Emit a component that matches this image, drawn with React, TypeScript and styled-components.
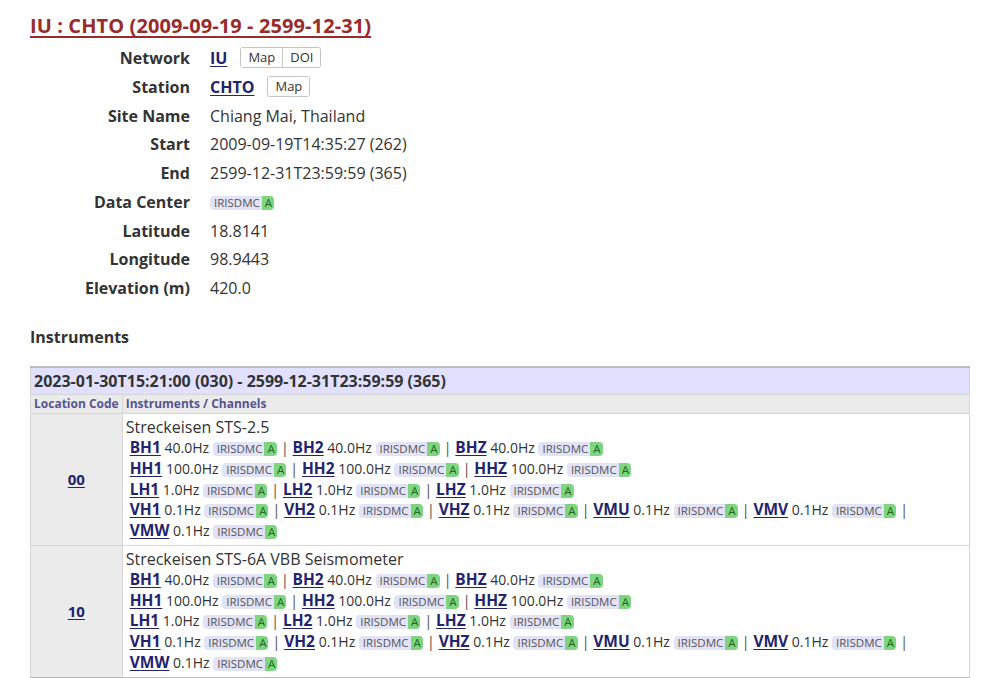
import React from "react";
import styled, { createGlobalStyle } from "styled-components";

const Global = createGlobalStyle`
  html, body { margin: 0; padding: 0; background: #fff; }
  body { font-family: "Open Sans", "Noto Sans", sans-serif; color: #333; }
`;

const Page = styled.div`
  padding: 12px 24px 0 30px;
`;

const Title = styled.h1`
  margin: 0;
  font-size: 20px;
  line-height: 28px;
  font-weight: 700;
  letter-spacing: 0.1px;
  a { color: #982c2c; text-decoration: underline; text-underline-offset: 3px; }
`;

const Details = styled.dl`
  display: grid;
  grid-template-columns: 160px 1fr;
  column-gap: 20px;
  row-gap: 4.75px;
  margin: 6px 0 0 0;
`;

const Label = styled.dt`
  text-align: right;
  font-weight: 700;
  font-size: 16px;
  line-height: 24px;
  color: #333;
`;

const Value = styled.dd`
  margin: 0;
  font-size: 16px;
  line-height: 24px;
  color: #333;
  display: flex;
  align-items: center;
  gap: 13px;
`;

const StrongLink = styled.a`
  color: #23236e;
  font-weight: 700;
  text-decoration: underline;
  text-underline-offset: 2px;
`;

const ButtonGroup = styled.span`
  display: inline-flex;
  border: 1px solid #c4c4c4;
  border-radius: 3px;
  height: 19px;
  align-items: stretch;
  overflow: hidden;
  margin-top: -1px;
`;

const SmallButton = styled.span`
  font-size: 13px;
  line-height: 19px;
  padding: 0 7px;
  color: #333;
  background: #fff;
  & + & { border-left: 1px solid #c4c4c4; }
`;

const Badge = styled.span`
  display: inline-flex;
  align-items: stretch;
  vertical-align: 0px;
  font-size: 11.5px;
  line-height: 14px;
  height: 14px;
`;

const BadgeName = styled.span`
  background: #e3e3f7;
  color: #555;
  padding: 0 2px 0 4px;
  border-radius: 4px 0 0 4px;
`;

const BadgeStatus = styled.span`
  background: #7fd47f;
  color: #236623;
  padding: 0 2px 0 3px;
  border-radius: 0 4px 4px 0;
`;

const DataCenterBadge = styled.span`
  display: inline-flex;
  margin-top: 2px;
`;

const SectionHead = styled.h2`
  margin: 27px 0 0 0;
  font-size: 16px;
  line-height: 20px;
  font-weight: 700;
  color: #333;
`;

const Table = styled.table`
  margin-top: 19px;
  width: 940px;
  border-collapse: collapse;
  border-top: 2px solid #bbb;
  border-left: 1px solid #d6d6d6;
  border-right: 1px solid #d6d6d6;
  border-bottom: 2px solid #bbb;
`;

const EpochCell = styled.th`
  background: #e1e1ff;
  text-align: left;
  font-size: 16px;
  font-weight: 700;
  line-height: 26px;
  padding: 0 3px;
  color: #333;
  border-bottom: 1px solid #d6d6d6;
`;

const ColHead = styled.th`
  background: #ebebeb;
  text-align: left;
  font-size: 12px;
  font-weight: 700;
  line-height: 18px;
  padding: 0 3px;
  color: #555590;
  border-bottom: 1px solid #d6d6d6;
  border-right: 1px solid #d6d6d6;
  white-space: nowrap;
  &:first-child { width: 84px; }
`;

const LocCell = styled.td`
  background: #ebebeb;
  text-align: center;
  vertical-align: middle;
  border-right: 1px solid #d6d6d6;
  border-bottom: 1px solid #d6d6d6;
  font-size: 15px;
`;

const InstCell = styled.td`
  padding: 2px 3px 3px 3px;
  vertical-align: top;
  border-bottom: 1px solid #d6d6d6;
`;

const InstName = styled.div`
  font-size: 16px;
  line-height: 22px;
  color: #333;
`;

const ChannelBlock = styled.div`
  padding-left: 4px;
  font-size: 14px;
  line-height: 20.75px;
`;

const ChannelLine = styled.div`
  line-height: 20.75px;
`;

const Channel = styled.span`
  white-space: nowrap;
  line-height: 16px;
`;

const ChanLink = styled.a`
  color: #23236e;
  font-weight: 700;
  font-size: 15.5px;
  line-height: 16px;
  text-decoration: underline;
  text-underline-offset: 2px;
`;

const Freq = styled.span`
  font-size: 14px;
  line-height: 16px;
  color: #333;
`;

const Sep = styled.span`
  font-size: 15px;
  line-height: 16px;
  color: #555;
`;

const DC = () => (
  <Badge>
    <BadgeName>IRISDMC</BadgeName>
    <BadgeStatus>A</BadgeStatus>
  </Badge>
);

type Ch = [string, string];
const groups: Ch[][] = [
  [["BH1", "40.0Hz"], ["BH2", "40.0Hz"], ["BHZ", "40.0Hz"]],
  [["HH1", "100.0Hz"], ["HH2", "100.0Hz"], ["HHZ", "100.0Hz"]],
  [["LH1", "1.0Hz"], ["LH2", "1.0Hz"], ["LHZ", "1.0Hz"]],
  [["VH1", "0.1Hz"], ["VH2", "0.1Hz"], ["VHZ", "0.1Hz"], ["VMU", "0.1Hz"], ["VMV", "0.1Hz"], ["VMW", "0.1Hz"]],
];

const Channels = () => (
  <ChannelBlock>
    {groups.map((g, gi) => (
      <ChannelLine key={gi}>
        {g.map(([c, f], i) => (
          <React.Fragment key={c}>
            <Channel>
              <ChanLink href="#">{c}</ChanLink> <Freq>{f}</Freq> <DC />
              {i < g.length - 1 && <Sep> |</Sep>}
            </Channel>{" "}
          </React.Fragment>
        ))}
      </ChannelLine>
    ))}
  </ChannelBlock>
);

const instruments = [
  { loc: "00", name: "Streckeisen STS-2.5" },
  { loc: "10", name: "Streckeisen STS-6A VBB Seismometer" },
];

export default function App() {
  return (
    <Page>
      <Global />
      <Title>
        <a href="#">IU : CHTO (2009-09-19 - 2599-12-31)</a>
      </Title>
      <Details>
        <Label>Network</Label>
        <Value>
          <StrongLink href="#">IU</StrongLink>
          <ButtonGroup>
            <SmallButton>Map</SmallButton>
            <SmallButton>DOI</SmallButton>
          </ButtonGroup>
        </Value>
        <Label>Station</Label>
        <Value>
          <StrongLink href="#">CHTO</StrongLink>
          <ButtonGroup>
            <SmallButton>Map</SmallButton>
          </ButtonGroup>
        </Value>
        <Label>Site Name</Label>
        <Value>Chiang Mai, Thailand</Value>
        <Label>Start</Label>
        <Value>2009-09-19T14:35:27 (262)</Value>
        <Label>End</Label>
        <Value>2599-12-31T23:59:59 (365)</Value>
        <Label>Data Center</Label>
        <Value>
          <DataCenterBadge>
            <DC />
          </DataCenterBadge>
        </Value>
        <Label>Latitude</Label>
        <Value>18.8141</Value>
        <Label>Longitude</Label>
        <Value>98.9443</Value>
        <Label>Elevation (m)</Label>
        <Value>420.0</Value>
      </Details>
      <SectionHead>Instruments</SectionHead>
      <Table>
        <thead>
          <tr>
            <EpochCell colSpan={2}>2023-01-30T15:21:00 (030) - 2599-12-31T23:59:59 (365)</EpochCell>
          </tr>
          <tr>
            <ColHead>Location Code</ColHead>
            <ColHead>Instruments / Channels</ColHead>
          </tr>
        </thead>
        <tbody>
          {instruments.map((r) => (
            <tr key={r.loc}>
              <LocCell>
                <StrongLink href="#">{r.loc}</StrongLink>
              </LocCell>
              <InstCell>
                <InstName>{r.name}</InstName>
                <Channels />
              </InstCell>
            </tr>
          ))}
        </tbody>
      </Table>
    </Page>
  );
}
